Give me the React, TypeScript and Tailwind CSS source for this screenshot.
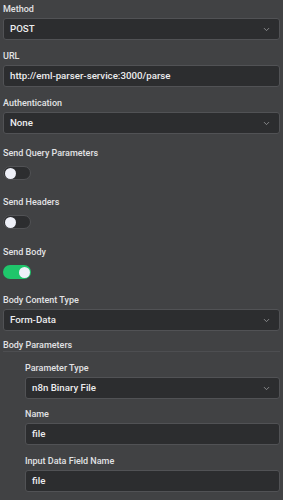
import { ChevronDown } from 'lucide-react'

function Label({ children, gap = 'mb-[3px]' }: { children: React.ReactNode; gap?: string }) {
  return <div className={`text-[9px] font-medium text-[#e2e2e4] leading-[12px] ${gap}`}>{children}</div>
}

function Select({ value }: { value: string }) {
  return (
    <div className="h-[22px] flex items-center justify-between bg-[#2c2d2f] border border-[#515255] rounded-[3px] pl-[6px] pr-[8px]">
      <span className="text-[9.7px] font-medium text-[#ececee]">{value}</span>
      <ChevronDown size={9} strokeWidth={2.2} className="text-[#98999c]" />
    </div>
  )
}

function Input({ value }: { value: string }) {
  return (
    <div className="h-[22px] flex items-center bg-[#2c2d2f] border border-[#515255] rounded-[3px] px-[6px]">
      <span className="text-[9.7px] font-medium text-[#ececee]">{value}</span>
    </div>
  )
}

function Toggle({ on }: { on?: boolean }) {
  return (
    <div
      className={`w-[28px] h-[14px] rounded-full flex items-center px-[1px] ${
        on ? 'bg-[#1fc66b] justify-end' : 'bg-[#2c2d2f] border border-[#515255] justify-start'
      }`}
    >
      <span className="w-[11px] h-[11px] rounded-full bg-[#eef0f8]" />
    </div>
  )
}

export default function App() {
  return (
    <div
      className="w-[283px] h-[500px] bg-[#414244] px-[3px] pt-[3px] overflow-hidden"
      style={{ fontFamily: 'Roboto, "Liberation Sans", sans-serif' }}
    >
      <Label>Method</Label>
      <Select value="POST" />
      <div className="mt-[10px]">
        <Label>URL</Label>
        <Input value="http://eml-parser-service:3000/parse" />
      </div>
      <div className="mt-[10px]">
        <Label>Authentication</Label>
        <Select value="None" />
      </div>
      <div className="mt-[13px]">
        <Label gap="mb-[7px]">Send Query Parameters</Label>
        <Toggle />
      </div>
      <div className="mt-[16px]">
        <Label gap="mb-[7px]">Send Headers</Label>
        <Toggle />
      </div>
      <div className="mt-[17px]">
        <Label gap="mb-[7px]">Send Body</Label>
        <Toggle on />
      </div>
      <div className="mt-[15px]">
        <Label>Body Content Type</Label>
        <Select value="Form-Data" />
      </div>
      <div className="mt-[8px] border-b border-[#4d4e51]">
        <Label gap="mb-0">Body Parameters</Label>
      </div>
      <div className="pl-[22px] mt-[10px]">
        <Label>Parameter Type</Label>
        <Select value="n8n Binary File" />
        <div className="mt-[9px]">
          <Label>Name</Label>
          <Input value="file" />
        </div>
        <div className="mt-[10px]">
          <Label>Input Data Field Name</Label>
          <Input value="file" />
        </div>
      </div>
    </div>
  )
}
